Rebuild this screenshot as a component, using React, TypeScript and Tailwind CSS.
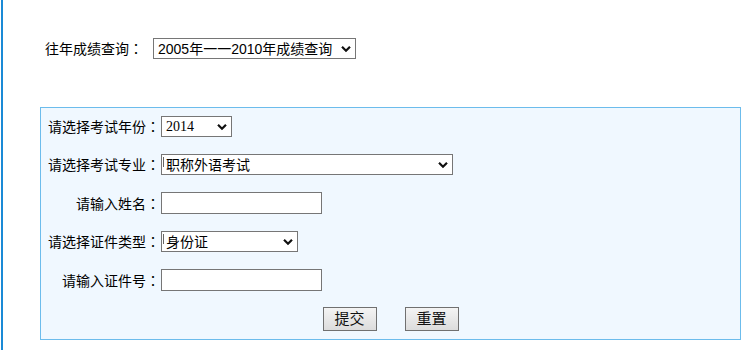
import type { ReactNode } from 'react';

const SANS = "font-['Liberation_Sans','Noto_Sans_CJK_SC',sans-serif]";

function Chevron() {
  return (
    <svg width="10" height="7" viewBox="0 0 10 7" className="absolute right-[4px] top-1/2 -translate-y-1/2">
      <polyline points="1,1.2 5,5.2 9,1.2" fill="none" stroke="#111" strokeWidth="2.2" />
    </svg>
  );
}

function FakeSelect({
  width,
  children,
  serif,
  caret,
}: {
  width: string;
  children: ReactNode;
  serif?: boolean;
  caret?: boolean;
}) {
  return (
    <div
      className={`relative flex h-[21px] items-center border border-[#767676] bg-white pl-[4px] text-[14px] leading-none text-black ${width} ${
        serif ? "font-['Liberation_Serif',serif]" : SANS
      }`}
    >
      {caret && <span className="absolute left-[1px] top-[2px] h-[10px] w-px bg-[#666]" />}
      <span className="whitespace-nowrap">{children}</span>
      <Chevron />
    </div>
  );
}

function TextBox() {
  return <input type="text" className="h-[22px] w-[161px] border border-[#767676] bg-white outline-none" />;
}

function Label({ text }: { text: string }) {
  return (
    <>
      {text}
      <span className="font-['Noto_Sans_CJK_TC',sans-serif]">：</span>
    </>
  );
}

function Row({ label, first, children }: { label: string; first?: boolean; children: ReactNode }) {
  return (
    <div className={`flex items-center ${first ? 'h-[37.5px]' : 'h-[38.5px]'}`}>
      <div className="w-[119px] text-right text-[14px] leading-none text-black">
        <Label text={label} />
      </div>
      <div className="ml-[1px]">{children}</div>
    </div>
  );
}

function Btn({ children }: { children: ReactNode }) {
  return (
    <button
      type="button"
      className="h-[24px] w-[54px] border border-[#707070] bg-gradient-to-b from-[#f4f4f4] to-[#dcdcdc] text-[15px] leading-none text-[#111]"
    >
      {children}
    </button>
  );
}

export default function App() {
  return (
    <div className={`ml-[1px] h-[350px] overflow-hidden border-l-2 border-[#1a8ad6] bg-white pt-[38px] ${SANS}`}>
      <div className="flex h-[21px] items-center pl-[42px]">
        <span className="w-[108px] text-[14px] leading-none text-black">
          <Label text="往年成绩查询" />
        </span>
        <FakeSelect width="w-[203px]">2005年一一2010年成绩查询</FakeSelect>
      </div>

      <div className="ml-[37px] mt-[48px] h-[233px] w-[701px] border border-[#6cbcec] bg-[#f0f8ff]">
        <Row label="请选择考试年份" first>
          <FakeSelect width="w-[71px]" serif>
            2014
          </FakeSelect>
        </Row>
        <Row label="请选择考试专业">
          <FakeSelect width="w-[292px]" caret>
            职称外语考试
          </FakeSelect>
        </Row>
        <Row label="请输入姓名">
          <TextBox />
        </Row>
        <Row label="请选择证件类型">
          <FakeSelect width="w-[137px]" caret>
            身份证
          </FakeSelect>
        </Row>
        <Row label="请输入证件号">
          <TextBox />
        </Row>
        <div className="flex h-[38.5px] items-center justify-center gap-[28px]">
          <Btn>提交</Btn>
          <Btn>重置</Btn>
        </div>
      </div>
    </div>
  );
}
